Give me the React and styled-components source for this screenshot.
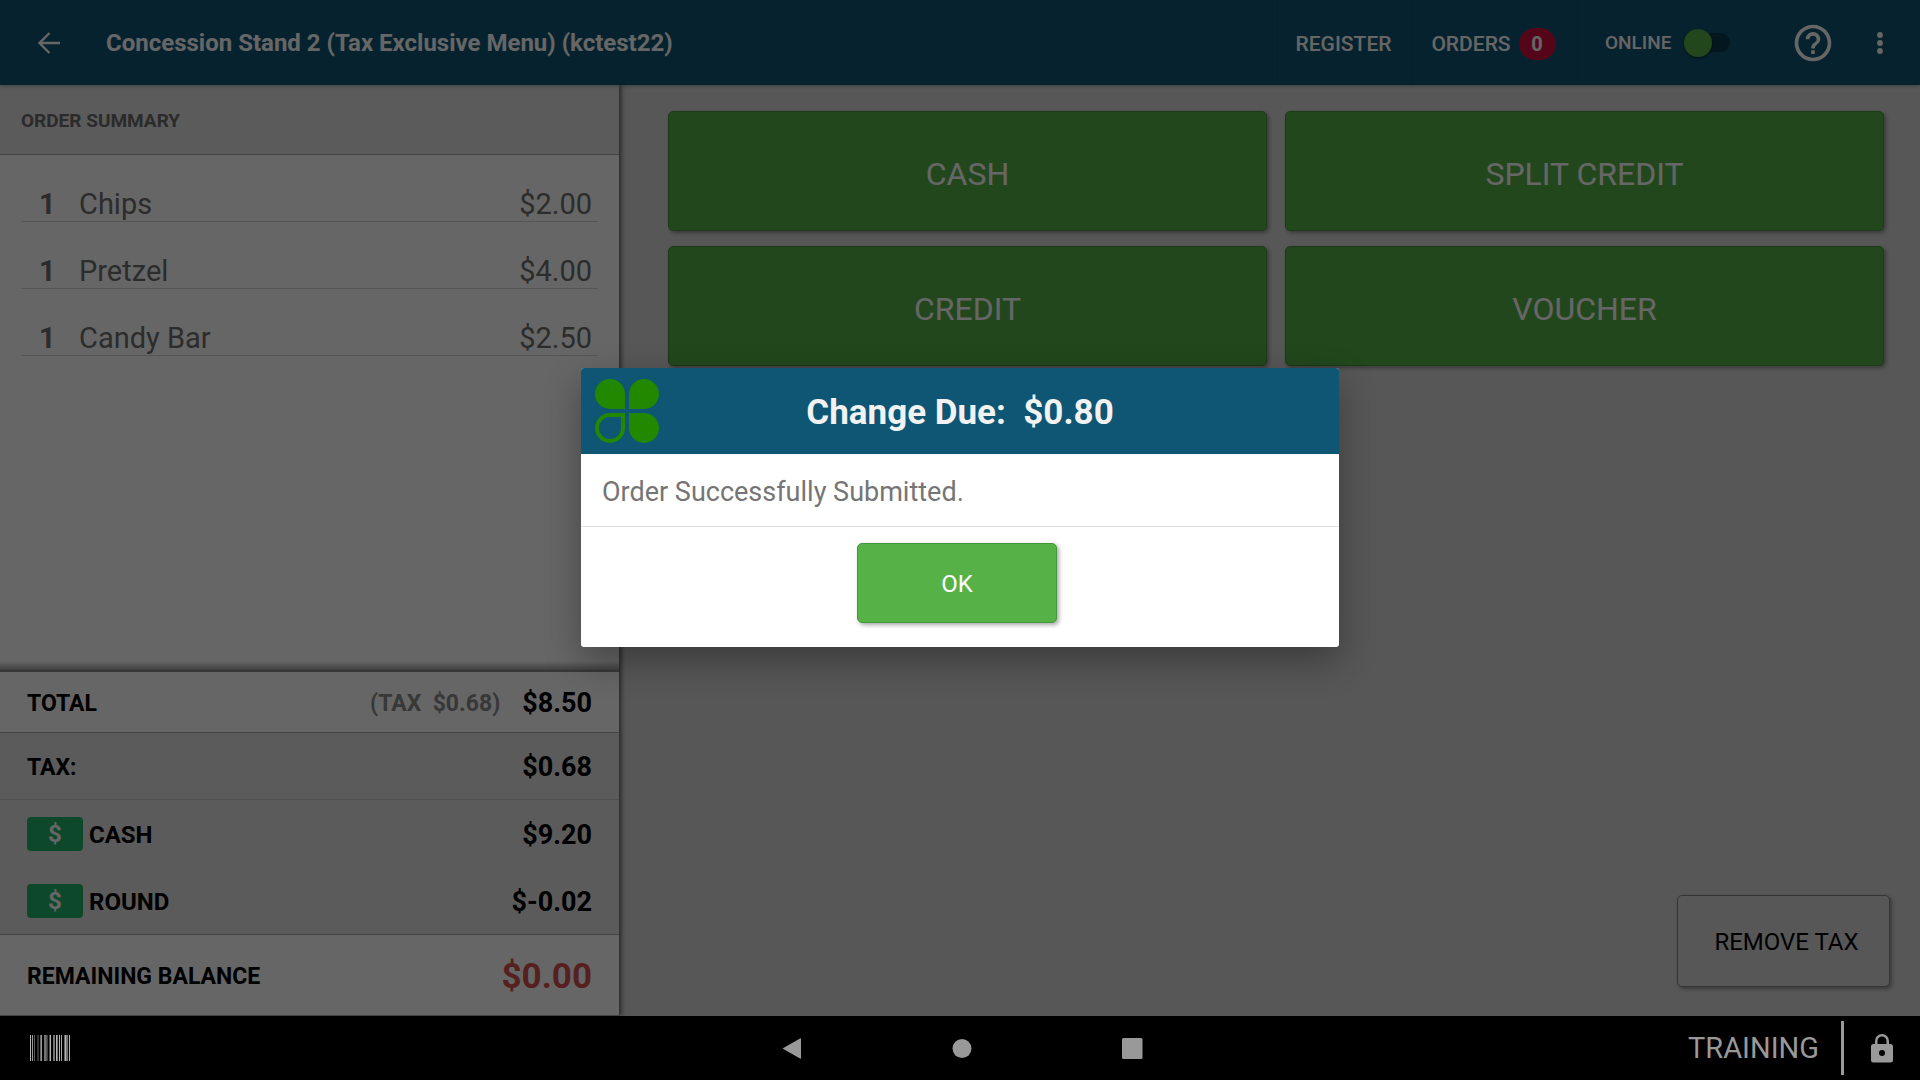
import React, { useState } from "react";
import styled, { createGlobalStyle, css } from "styled-components";

const color = {
  brand: "#0f5574",
  green: "#56b247",
  greenEdge: "#43973a",
  panel: "#ffffff",
  panelAlt: "#e3e3e3",
  page: "#dadada",
  line: "#c6c6c6",
  muted: "#757575",
  nav: "#999999",
};

const GlobalStyle = createGlobalStyle`
  *, *::before, *::after { box-sizing: border-box; }
  body { margin: 0; background: #000; font-family: Roboto, "Liberation Sans", sans-serif; }
  button { font: inherit; cursor: pointer; }
  h1, h2, p, dl, dd, dt { margin: 0; }
`;

const Screen = styled.div`
  display: flex;
  flex-direction: column;
  height: 100vh;
`;

const Stage = styled.div`
  position: relative;
  flex: 1;
  min-height: 0;
  display: flex;
  flex-direction: column;
`;

const TopBar = styled.header`
  position: relative;
  flex: none;
  display: flex;
  align-items: stretch;
  height: 85px;
  background: ${color.brand};
  box-shadow: 0 1px 4px rgba(0, 0, 0, 0.3);
  color: #fff;
`;

const IconButton = styled.button`
  display: flex;
  align-items: center;
  justify-content: center;
  width: ${(p) => p.$width}px;
  padding: 0;
  border: 0;
  background: none;
  color: inherit;
`;

const Title = styled.h1`
  flex: 1;
  align-self: center;
  padding-left: 8px;
  font-size: 24px;
  line-height: 28px;
  font-weight: 700;
`;

const TabButton = styled.button`
  display: flex;
  align-items: center;
  justify-content: center;
  gap: 8px;
  width: ${(p) => p.$width}px;
  padding: 2px 2px 0 0;
  border: 0;
  border-left: 1px solid #1c4a63;
  background: none;
  color: inherit;
  font-size: 21px;
  line-height: 24px;
  font-weight: 500;
`;

const Badge = styled.span`
  min-width: 37px;
  padding: 4px 0;
  border-radius: 16px;
  background: #d2103e;
  font-size: 20px;
  line-height: 24px;
  font-weight: 700;
  text-align: center;
`;

const OnlineLabel = styled.label`
  display: flex;
  align-items: center;
  gap: 13px;
  width: 209px;
  padding-left: 27px;
  border-left: 1px solid #1c4a63;
  font-size: 19px;
  line-height: 24px;
  font-weight: 500;
`;

const Switch = styled.input`
  appearance: none;
  display: flex;
  align-items: center;
  width: 46px;
  height: 19px;
  margin: 0;
  border-radius: 10px;
  background: #0a3b4b;
  cursor: pointer;

  &::before {
    content: "";
    width: 28px;
    height: 28px;
    border-radius: 50%;
    background: ${color.green};
    box-shadow: 0 1px 3px rgba(0, 0, 0, 0.5);
  }
`;

const Workspace = styled.div`
  flex: 1;
  min-height: 0;
  display: flex;
  background: ${color.page};
`;

const OrderPanel = styled.section`
  flex: none;
  display: flex;
  flex-direction: column;
  width: 619px;
  background: ${color.panel};
  box-shadow: 2px 0 5px rgba(0, 0, 0, 0.6);
`;

const PanelTitle = styled.h2`
  padding: 24px 21px 22px;
  border-bottom: 1px solid #a8a8a8;
  background: ${color.panelAlt};
  color: #6c6c6c;
  font-size: 19px;
  line-height: 23px;
  font-weight: 700;
`;

const Items = styled.div`
  flex: 1;
  padding: 0 21px;
  background: linear-gradient(to top, #a0a0a0, transparent 9px);
`;

const ItemTable = styled.table`
  width: 100%;
  border-spacing: 0;
  color: #6f6f6f;
  font-size: 29px;
  line-height: 32px;
`;

const ItemRow = styled.tr`
  height: 67px;
`;

const Cell = styled.td`
  padding: 0 6px 1px 0;
  border-bottom: 1px solid #d4d4d4;
  vertical-align: bottom;
  text-align: ${(p) => p.$align || "left"};
  font-weight: ${(p) => (p.$strong ? 700 : 400)};
`;

const QtyCell = styled(Cell)`
  width: 58px;
  padding-left: 18px;
`;

const Totals = styled.dl`
  flex: none;
  border-top: 2px solid #8d8d8d;
`;

const TotalRow = styled.div`
  display: flex;
  align-items: center;
  height: ${(p) => p.$height}px;
  padding: 0 27px;
  background: ${(p) => (p.$alt ? color.panelAlt : color.panel)};
  border-bottom: ${(p) => (p.$line ? `1px solid ${p.$line}` : "0")};
  color: #000;
  font-weight: 700;
`;

const TotalName = styled.dt`
  flex: 1;
  display: flex;
  align-items: center;
  gap: 6px;
  font-size: ${(p) => (p.$tender ? 24 : 23)}px;
  line-height: 28px;
`;

const NameText = styled.span`
  padding-top: 3px;
`;

const TaxNote = styled.dd`
  margin-right: 22px;
  padding-top: 3px;
  color: #8c8c8c;
  font-size: 23px;
  line-height: 28px;
  white-space: pre;
`;

const Amount = styled.dd`
  padding-top: ${(p) => (p.$due ? 4 : 2)}px;
  font-size: ${(p) => (p.$due ? 35 : 27)}px;
  line-height: 32px;
  color: ${(p) => (p.$due ? "#d95050" : "inherit")};
`;

const Bill = styled.span`
  display: flex;
  align-items: center;
  justify-content: center;
  width: 56px;
  height: 34px;
  border-radius: 4px;
  background: #24b36b;
  color: #fff;
  font-size: 24px;
`;

const Payments = styled.main`
  flex: 1;
  display: flex;
  flex-direction: column;
  justify-content: space-between;
  padding: 26px 36px 29px 49px;
`;

const TenderGrid = styled.div`
  display: grid;
  grid-template-columns: 1fr 1fr;
  gap: 15px 18px;
`;

const raised = css`
  border-radius: 5px;
  box-shadow: 2px 2px 4px rgba(0, 0, 0, 0.35);
`;

const TenderButton = styled.button`
  ${raised}
  height: 120px;
  padding: 6px 0 0;
  border: 1px solid ${color.greenEdge};
  background: ${color.green};
  color: #fff;
  font-size: 32px;
  line-height: 36px;
`;

const RemoveTaxButton = styled.button`
  ${raised}
  align-self: flex-end;
  width: 213px;
  height: 92px;
  margin-right: -6px;
  padding: 2px 0 0 6px;
  border: 1px solid #848484;
  background: ${color.page};
  color: #000;
  font-size: 24px;
  line-height: 28px;
`;

const Scrim = styled.div`
  position: absolute;
  inset: 0;
  display: flex;
  align-items: center;
  justify-content: center;
  padding-bottom: 1px;
  background: rgba(0, 0, 0, 0.6);
`;

const Dialog = styled.div`
  width: 758px;
  border-radius: 3px;
  overflow: hidden;
  background: #fff;
  box-shadow: 0 14px 36px rgba(0, 0, 0, 0.32);
`;

const DialogHeader = styled.header`
  display: grid;
  grid-template-columns: 64px 1fr 64px;
  align-items: center;
  height: 86px;
  padding: 0 14px;
  background: ${color.brand};
`;

const DialogTitle = styled.h2`
  padding-top: 4px;
  color: #f2f2f2;
  font-size: 35px;
  line-height: 40px;
  font-weight: 700;
  text-align: center;
  white-space: pre;
`;

const DialogText = styled.p`
  padding: 22px 21px 17px;
  border-bottom: 1px solid #dedede;
  color: ${color.muted};
  font-size: 27px;
  line-height: 33px;
`;

const DialogActions = styled.div`
  display: flex;
  justify-content: center;
  padding: 16px 6px 24px 0;
`;

const OkButton = styled.button`
  ${raised}
  width: 200px;
  height: 80px;
  padding: 2px 0 0;
  border: 1px solid ${color.greenEdge};
  background: ${color.green};
  color: #fff;
  font-size: 24px;
  line-height: 28px;
`;

const NavBar = styled.nav`
  flex: none;
  display: grid;
  grid-template-columns: 1fr auto 1fr;
  align-items: center;
  height: 64px;
  padding: 0 27px 0 30px;
  background: #000;
  color: ${color.nav};
`;

const NavKeys = styled.div`
  display: flex;
`;

const Status = styled.div`
  display: flex;
  align-items: center;
  justify-content: flex-end;
  font-size: 29px;
  line-height: 34px;
`;

const StatusRule = styled.span`
  width: 3px;
  height: 54px;
  margin: 0 27px 0 22px;
  background: ${color.nav};
`;

const BackArrow = () => (
  <svg width="22" height="22" viewBox="0 0 22 22" fill="none" stroke="currentColor" strokeWidth="2.3" aria-hidden="true">
    <path d="M22 11H2M11.5 1L1.5 11l10 10" />
  </svg>
);

const HelpIcon = () => (
  <svg width="44" height="44" viewBox="0 0 24 24" fill="currentColor" aria-hidden="true">
    <path d="M11 18h2v-2h-2v2zm1-16C6.48 2 2 6.48 2 12s4.480 10 10 10 10-4.480 10-10S17.520 2 12 2zm0 18c-4.410 0-8-3.590-8-8s3.590-8 8-8 8 3.590 8 8-3.590 8-8 8zm0-14c-2.210 0-4 1.790-4 4h2c0-1.100.9-2 2-2s2 .9 2 2c0 2-3 1.750-3 5h2c0-2.250 3-2.500 3-5 0-2.210-1.790-4-4-4z" />
  </svg>
);

const MoreIcon = () => (
  <svg width="6" height="22" viewBox="0 0 6 22" fill="currentColor" aria-hidden="true">
    <circle cx="3" cy="3" r="2.900" />
    <circle cx="3" cy="11" r="2.900" />
    <circle cx="3" cy="19" r="2.900" />
  </svg>
);

const CloverLogo = () => (
  <svg width="64" height="64" viewBox="0 0 64 64" fill="#228800" aria-hidden="true">
    <path d="M30 30H15A15 15 0 1 1 30 15z" />
    <path d="M34 30V15A15 15 0 1 1 49 30z" />
    <path d="M34 34H49A15 15 0 1 1 34 49z" />
    <path fillRule="evenodd" d="M30 34V49A15 15 0 1 1 15 34zM26 38H15A11 11 0 1 0 26 49z" />
  </svg>
);

const bars = [
  [0, 1, 0.7], [2, 1, 0.6], [4, 1, 0.35], [7, 2, 0.2], [10, 1, 0.4], [11, 1, 0.6],
  [14, 2, 0.45], [16, 1, 0.35], [17, 1, 0.25], [19, 1, 0.3], [20, 1, 0.7], [23, 2, 0.45],
  [26, 1, 0.7], [27, 1, 0.45], [29, 1, 0.7], [31, 1, 0.65], [34, 1, 0.4], [35, 1, 0.7],
  [36, 2, 0.45], [39, 1, 0.7],
];

const BarcodeIcon = () => (
  <svg width="40" height="26" viewBox="0 0 40 26" fill="#fff" aria-hidden="true">
    {bars.map(([x, w, o]) => (
      <rect key={x} x={x} y="0" width={w} height="26" opacity={o} />
    ))}
  </svg>
);

const LockIcon = () => (
  <svg width="22" height="29" viewBox="0 0 22 29" fill="currentColor" aria-hidden="true">
    <path fillRule="evenodd" d="M4 10V7a7 7 0 0 1 14 0v3h1.500A2.500 2.500 0 0 1 22 12.500v13.500A2.500 2.500 0 0 1 19.500 28.500h-17A2.500 2.500 0 0 1 0 26V12.500A2.500 2.500 0 0 1 2.500 10zM6.500 10h9V7a4.500 4.500 0 0 0-9 0zM11 16a3 3 0 1 0 0 6 3 3 0 0 0 0-6z" />
  </svg>
);

const keys = [
  { name: "Back", shape: <path d="M1.500 10.500L19 0.500q1-.5 1 .5v19q0 1-1 .5z" /> },
  { name: "Home", shape: <circle cx="11" cy="10.500" r="9.500" /> },
  { name: "Recents", shape: <rect x="1" y="0" width="20.500" height="21" rx="1.500" /> },
];

const items = [
  { qty: 1, name: "Chips", price: "$2.00" },
  { qty: 1, name: "Pretzel", price: "$4.00" },
  { qty: 1, name: "Candy Bar", price: "$2.50" },
];

const tenders = ["CASH", "SPLIT CREDIT", "CREDIT", "VOUCHER"];

export default function App() {
  const [open, setOpen] = useState(true);
  const [offline, setOffline] = useState(false);

  return (
    <Screen>
      <GlobalStyle />
      <Stage>
        <TopBar>
          <IconButton $width={98} aria-label="Back"><BackArrow /></IconButton>
          <Title>Concession Stand 2 (Tax Exclusive Menu) (kctest22)</Title>
          <TabButton $width={134}>REGISTER</TabButton>
          <TabButton $width={166}>ORDERS <Badge>0</Badge></TabButton>
          <OnlineLabel>
            ONLINE
            <Switch type="checkbox" checked={offline} onChange={() => setOffline(!offline)} />
          </OnlineLabel>
          <IconButton $width={54} aria-label="Help"><HelpIcon /></IconButton>
          <IconButton $width={80} aria-label="More options"><MoreIcon /></IconButton>
        </TopBar>

        <Workspace>
          <OrderPanel>
            <PanelTitle>ORDER SUMMARY</PanelTitle>
            <Items>
              <ItemTable>
                <tbody>
                  {items.map((item) => (
                    <ItemRow key={item.name}>
                      <QtyCell $strong>{item.qty}</QtyCell>
                      <Cell>{item.name}</Cell>
                      <Cell $align="right">{item.price}</Cell>
                    </ItemRow>
                  ))}
                </tbody>
              </ItemTable>
            </Items>
            <Totals>
              <TotalRow $height={61} $line="#a8a8a8">
                <TotalName><NameText>TOTAL</NameText></TotalName>
                <TaxNote>{"(TAX  $0.68)"}</TaxNote>
                <Amount>$8.50</Amount>
              </TotalRow>
              <TotalRow $height={67} $alt $line={color.line}>
                <TotalName><NameText>TAX:</NameText></TotalName>
                <Amount>$0.68</Amount>
              </TotalRow>
              <TotalRow $height={67} $alt>
                <TotalName $tender><Bill>$</Bill><NameText>CASH</NameText></TotalName>
                <Amount>$9.20</Amount>
              </TotalRow>
              <TotalRow $height={68} $alt $line="#a8a8a8">
                <TotalName $tender><Bill>$</Bill><NameText>ROUND</NameText></TotalName>
                <Amount>$-0.02</Amount>
              </TotalRow>
              <TotalRow $height={81} $line="#a8a8a8">
                <TotalName><NameText>REMAINING BALANCE</NameText></TotalName>
                <Amount $due>$0.00</Amount>
              </TotalRow>
            </Totals>
          </OrderPanel>

          <Payments>
            <TenderGrid>
              {tenders.map((t) => <TenderButton key={t}>{t}</TenderButton>)}
            </TenderGrid>
            <RemoveTaxButton>REMOVE TAX</RemoveTaxButton>
          </Payments>
        </Workspace>

        {open && (
          <Scrim>
            <Dialog role="dialog" aria-modal="true" aria-labelledby="dialog-title">
              <DialogHeader>
                <CloverLogo />
                <DialogTitle id="dialog-title">{"Change Due:  $0.80"}</DialogTitle>
              </DialogHeader>
              <DialogText>Order Successfully Submitted.</DialogText>
              <DialogActions>
                <OkButton onClick={() => setOpen(false)}>OK</OkButton>
              </DialogActions>
            </Dialog>
          </Scrim>
        )}
      </Stage>

      <NavBar>
        <BarcodeIcon />
        <NavKeys>
          {keys.map((k) => (
            <IconButton key={k.name} $width={170} aria-label={k.name}>
              <svg width="22" height="21" viewBox="0 0 22 21" fill="currentColor" aria-hidden="true">{k.shape}</svg>
            </IconButton>
          ))}
        </NavKeys>
        <Status>
          TRAINING
          <StatusRule />
          <LockIcon />
        </Status>
      </NavBar>
    </Screen>
  );
}
